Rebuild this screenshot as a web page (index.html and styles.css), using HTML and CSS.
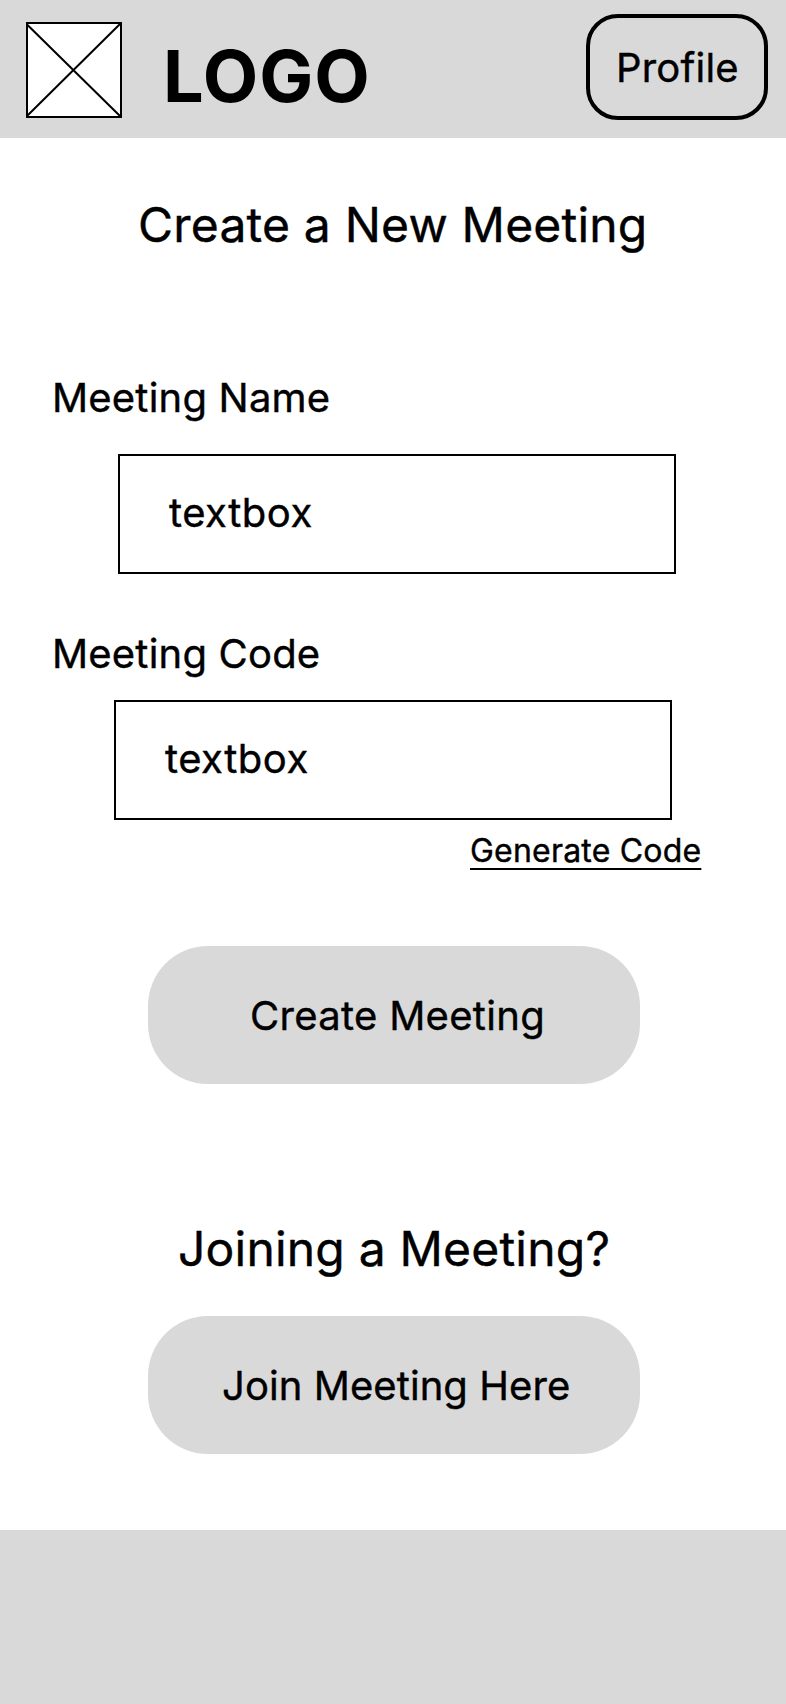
FILE: index.html
```html
<!DOCTYPE html>
<html lang="en">
<head>
<meta charset="utf-8">
<title>Create a New Meeting</title>
<link rel="stylesheet" href="styles.css">
</head>
<body>
<header class="header">
  <svg class="logo-mark" viewBox="0 0 96 96" aria-hidden="true">
    <rect x="1" y="1" width="94" height="94" fill="#fff" stroke="#000" stroke-width="2"/>
    <path d="M1 2.5 95 95M1 94 95 1" fill="none" stroke="#000" stroke-width="2"/>
  </svg>
  <span class="logo-text">LOGO</span>
  <a class="profile">Profile</a>
</header>
<main class="main">
  <h1 class="title">Create a New Meeting</h1>
  <section class="field field-name">
    <span class="label">Meeting Name</span>
    <div class="textbox">textbox</div>
  </section>
  <section class="field field-code">
    <span class="label">Meeting Code</span>
    <div class="textbox">textbox</div>
    <a class="generate">Generate Code</a>
  </section>
  <a class="button create">Create Meeting</a>
  <h2 class="title joining">Joining a Meeting?</h2>
  <a class="button join">Join Meeting Here</a>
</main>
<footer class="footer"></footer>
</body>
</html>
```
FILE: styles.css
```css
* { box-sizing: border-box; }
body {
  margin: 0;
  min-height: 1704px;
  display: flex;
  flex-direction: column;
  background: #fff;
  color: #000;
  font: 400 40px/48px Inter, sans-serif;
  letter-spacing: 0.2px;
  -webkit-text-stroke: 0.4px #000;
}
.header {
  display: flex;
  align-items: flex-start;
  height: 138px;
  padding: 14px 18px 0 26px;
  background: #d9d9d9;
}
.logo-mark { width: 96px; height: 96px; margin-top: 8px; }
.logo-text {
  margin: 18px 0 0 41px;
  font-size: 72px;
  font-weight: 700;
  line-height: 88px;
  letter-spacing: 1px;
  -webkit-text-stroke: 0;
}
.profile {
  width: 182px;
  height: 106px;
  margin-left: auto;
  padding: 26px 0 0 26px;
  border: 4px solid #000;
  border-radius: 32px;
}
.main {
  height: 1392px;
  padding-top: 58px;
  display: flex;
  flex-direction: column;
}
.title {
  margin: 0 0 0 138px;
  font-size: 48px;
  font-weight: 400;
  line-height: 58px;
  white-space: nowrap;
}
.field { display: flex; flex-direction: column; align-items: flex-start; }
.field-name { margin-top: 120px; gap: 32px; padding-left: 52px; }
.field-code { margin-top: 56px; padding-left: 52px; }
.textbox {
  width: 558px;
  height: 120px;
  border: 2px solid #000;
  padding: 33px 0 0 49px;
  letter-spacing: 0.5px;
}
.field-name .textbox { margin-left: 66px; }
.field-code .textbox { margin: 22px 0 0 62px; }
.generate {
  margin: 11px 0 0 418px;
  font-size: 32px;
  line-height: 39px;
  text-decoration: underline;
  text-decoration-thickness: 2px;
  text-underline-offset: 6px;
}
.button {
  width: 492px;
  height: 138px;
  margin-left: 148px;
  border-radius: 60px;
  background: #d9d9d9;
}
.create { margin-top: 76px; padding: 46px 0 0 102px; letter-spacing: 0.3px; }
.joining { margin: 136px 0 38px 178px; }
.join { padding: 46px 0 0 74px; letter-spacing: 0.07px; }
.footer { flex: 1; background: #d9d9d9; }
```
